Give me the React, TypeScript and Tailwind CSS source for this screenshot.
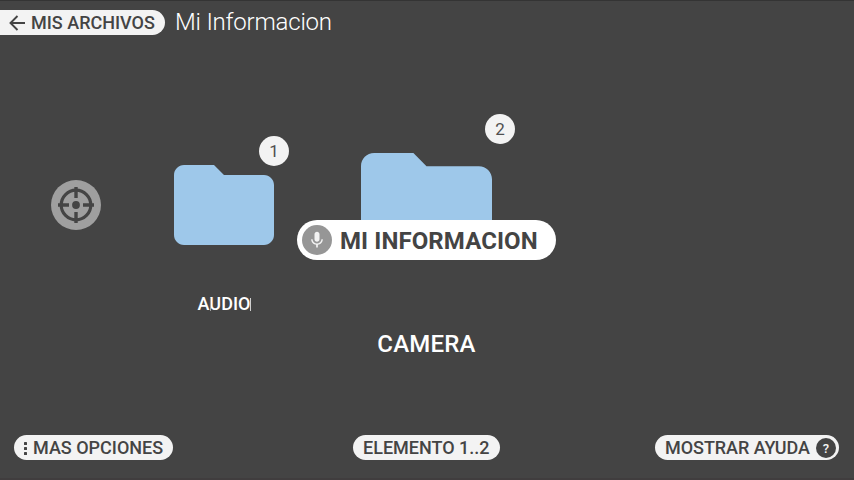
import React from "react";

function Folder({ className }: { className: string }) {
  return (
    <svg viewBox="2 4 20 16" className={className} fill="#9ec8ea">
      <path d="M10 4H4c-1.1 0-2 .9-2 2v12c0 1.1.9 2 2 2h16c1.1 0 2-.9 2-2V8c0-1.1-.9-2-2-2h-8l-2-2z" />
    </svg>
  );
}

function Badge({ n, className }: { n: number; className: string }) {
  return (
    <span
      className={`absolute flex h-[30px] w-[30px] items-center justify-center rounded-full bg-[#f3f3f3] pt-px text-[17px] font-normal text-[#505050] ${className}`}
    >
      {n}
    </span>
  );
}

function Target() {
  return (
    <button className="flex h-[50px] w-[50px] items-center justify-center rounded-full bg-[#9f9f9f]">
      <svg viewBox="0 0 36 36" className="h-9 w-9" fill="none" stroke="#444444">
        <circle cx="18" cy="18" r="14.8" strokeWidth="3.2" />
        <path d="M18 0v11M18 25v11M0 18h11M25 18h11" strokeWidth="3.4" />
        <circle cx="18" cy="18" r="3.9" fill="#444444" stroke="none" />
      </svg>
    </button>
  );
}

const pill = "flex h-[25px] items-center rounded-full bg-[#f3f3f3] text-[18px] font-medium leading-[25px] text-[#444444] whitespace-nowrap";

export default function App() {
  return (
    <div className="flex h-[480px] w-[854px] flex-col overflow-hidden border-b-2 border-t border-b-[#403d3e] border-t-[#343434] bg-[#444444] font-[Roboto,sans-serif] text-white">
      <header className="flex h-11 shrink-0 items-start pt-[9px]">
        <button className={`${pill} w-[165px] rounded-l-none pl-[9px]`}>
          <svg viewBox="0 0 16 16" className="mr-[6px] h-4 w-4 shrink-0" fill="none" stroke="#444444" strokeWidth="1.9">
            <path d="M16 8H1.5M8.5 1L1.5 8l7 7" />
          </svg>
          <span>MIS ARCHIVOS</span>
        </button>
        <h1 className="ml-[10px] text-[24px] font-light leading-[24px] tracking-[-0.2px]">Mi Informacion</h1>
      </header>

      <main className="relative flex flex-1 items-start pl-[51px]">
        <div className="pt-[135px]">
          <Target />
        </div>
        <section className="relative ml-[73px] flex w-[100px] flex-col items-center pt-[120px]">
          <Folder className="h-20 w-[100px]" />
          <Badge n={1} className="left-[85px] top-[91px]" />
          <h2 className="relative mt-[47px] text-[18px] font-medium leading-6">
            <span className="inline-block origin-center">AUDIO</span>
            <i className="absolute -right-px top-[6px] h-[13px] w-px bg-[#cfcfcf]" />
            <i className="absolute left-[12px] top-[6px] h-[13px] w-px bg-[#a0a0a0]" />
          </h2>
        </section>
        <section className="relative ml-[87px] flex w-[131px] flex-col items-center pt-[108px]">
          <Folder className="h-[105px] w-[131px]" />
          <Badge n={2} className="left-[124px] top-[69px]" />
          <h2 className="mt-[70px] text-[24px] font-medium leading-8 tracking-[0.2px]">CAMERA</h2>
        </section>
        <div className="absolute left-[297px] top-[175px] flex h-10 w-[259px] items-center rounded-full bg-white pl-[5px]">
          <span className="flex h-[30px] w-[30px] shrink-0 items-center justify-center rounded-full bg-[#969696]">
            <svg viewBox="0 0 24 24" className="h-5 w-5" fill="#f3f3f3">
              <path d="M12 14c1.66 0 3-1.34 3-3V5c0-1.66-1.34-3-3-3S9 3.34 9 5v6c0 1.66 1.34 3 3 3zm5.3-3c0 3-2.54 5.1-5.3 5.1S6.7 14 6.7 11H5c0 3.41 2.72 6.23 6 6.72V21h2v-3.28c3.28-.48 6-3.3 6-6.72h-1.7z" />
            </svg>
          </span>
          <span className="ml-2 whitespace-nowrap pt-[2px] text-[24px] font-bold leading-10 tracking-[0.1px] text-[#444444]">MI INFORMACION</span>
        </div>
      </main>

      <footer className="flex h-[43px] shrink-0 items-start pl-[14px]">
        <button className={`${pill} w-[159px] pl-[9px]`}>
          <svg viewBox="0 0 5 14" className="mr-[5px] h-[14px] w-[5px] shrink-0" fill="#444444">
            <rect x="1" y="1" width="3" height="3" rx=".6" />
            <rect x="1" y="6" width="3" height="3" rx=".6" />
            <rect x="1" y="11" width="3" height="3" rx=".6" />
          </svg>
          <span>MAS OPCIONES</span>
        </button>
        <div className={`${pill} ml-[180px] w-[147px] pl-[10px]`}>ELEMENTO 1..2</div>
        <button className={`${pill} ml-[155px] w-[184px] pl-[10px]`}>
          <span className="w-[151px] text-left tracking-[-0.05px]">MOSTRAR AYUDA</span>
          <span className="flex h-5 w-5 shrink-0 items-center justify-center rounded-full bg-[#444444] pt-px text-[13px] font-medium text-[#f3f3f3]">?</span>
        </button>
      </footer>
    </div>
  );
}
